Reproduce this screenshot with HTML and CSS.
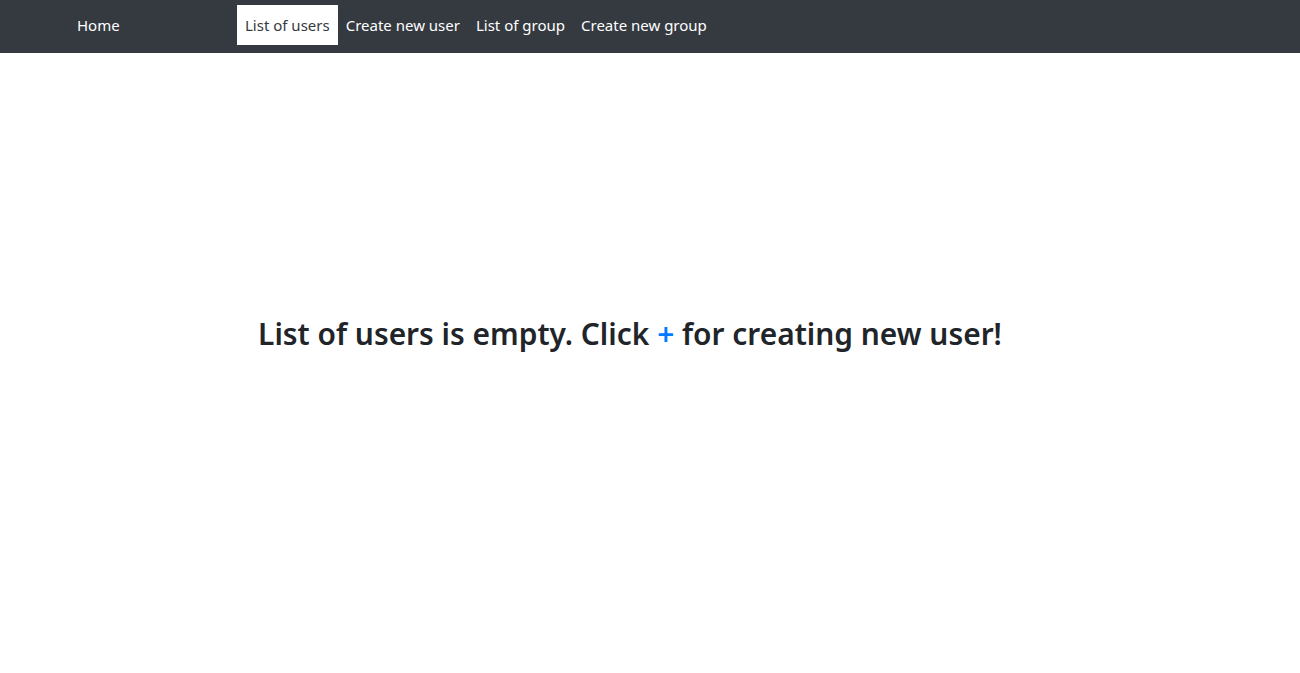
FILE: index.html
```html
<!DOCTYPE html>
<html lang="en">
<head>
<meta charset="utf-8">
<title>Users</title>
<link rel="stylesheet" href="styles.css">
</head>
<body>
<nav class="navbar">
  <a class="home" href="#">Home</a>
  <ul class="nav">
    <li><a class="nav-link active" href="#">List of users</a></li>
    <li><a class="nav-link" href="#">Create new user</a></li>
    <li><a class="nav-link" href="#">List of group</a></li>
    <li><a class="nav-link" href="#">Create new group</a></li>
  </ul>
</nav>
<main class="content">
  <h2 class="empty">List of users is empty. Click <a class="plus" href="#">+</a> for creating new user!</h2>
</main>
</body>
</html>
```

FILE: styles.css
```css
* { box-sizing: border-box; }
html, body { margin: 0; padding: 0; }
body {
  font-family: "Noto Sans", "Open Sans", sans-serif;
  font-size: 15px;
  line-height: 1.5;
  color: #212529;
  background: #fff;
  width: 1300px;
  height: 673px;
  overflow: hidden;
}
.navbar {
  display: flex;
  align-items: center;
  height: 53px;
  background: #343a40;
  padding: 5px 0 8px 77px;
}
.home {
  color: #fff;
  text-decoration: none;
  width: 160px;
}
.nav {
  display: flex;
  list-style: none;
  margin: 0;
  padding: 0;
}
.nav-link {
  display: block;
  padding: 8px 8px;
  color: #fff;
  text-decoration: none;
  line-height: 24px;
}
.nav-link.active {
  background: #fff;
  color: #343a40;
}
.content {
  display: flex;
  justify-content: center;
  padding-top: 262px;
  padding-right: 40px;
}
.empty {
  margin: 0;
  font-size: 29.9px;
  font-weight: 600;
  line-height: 38px;
}
.plus {
  color: #007bff;
  text-decoration: none;
}
```
